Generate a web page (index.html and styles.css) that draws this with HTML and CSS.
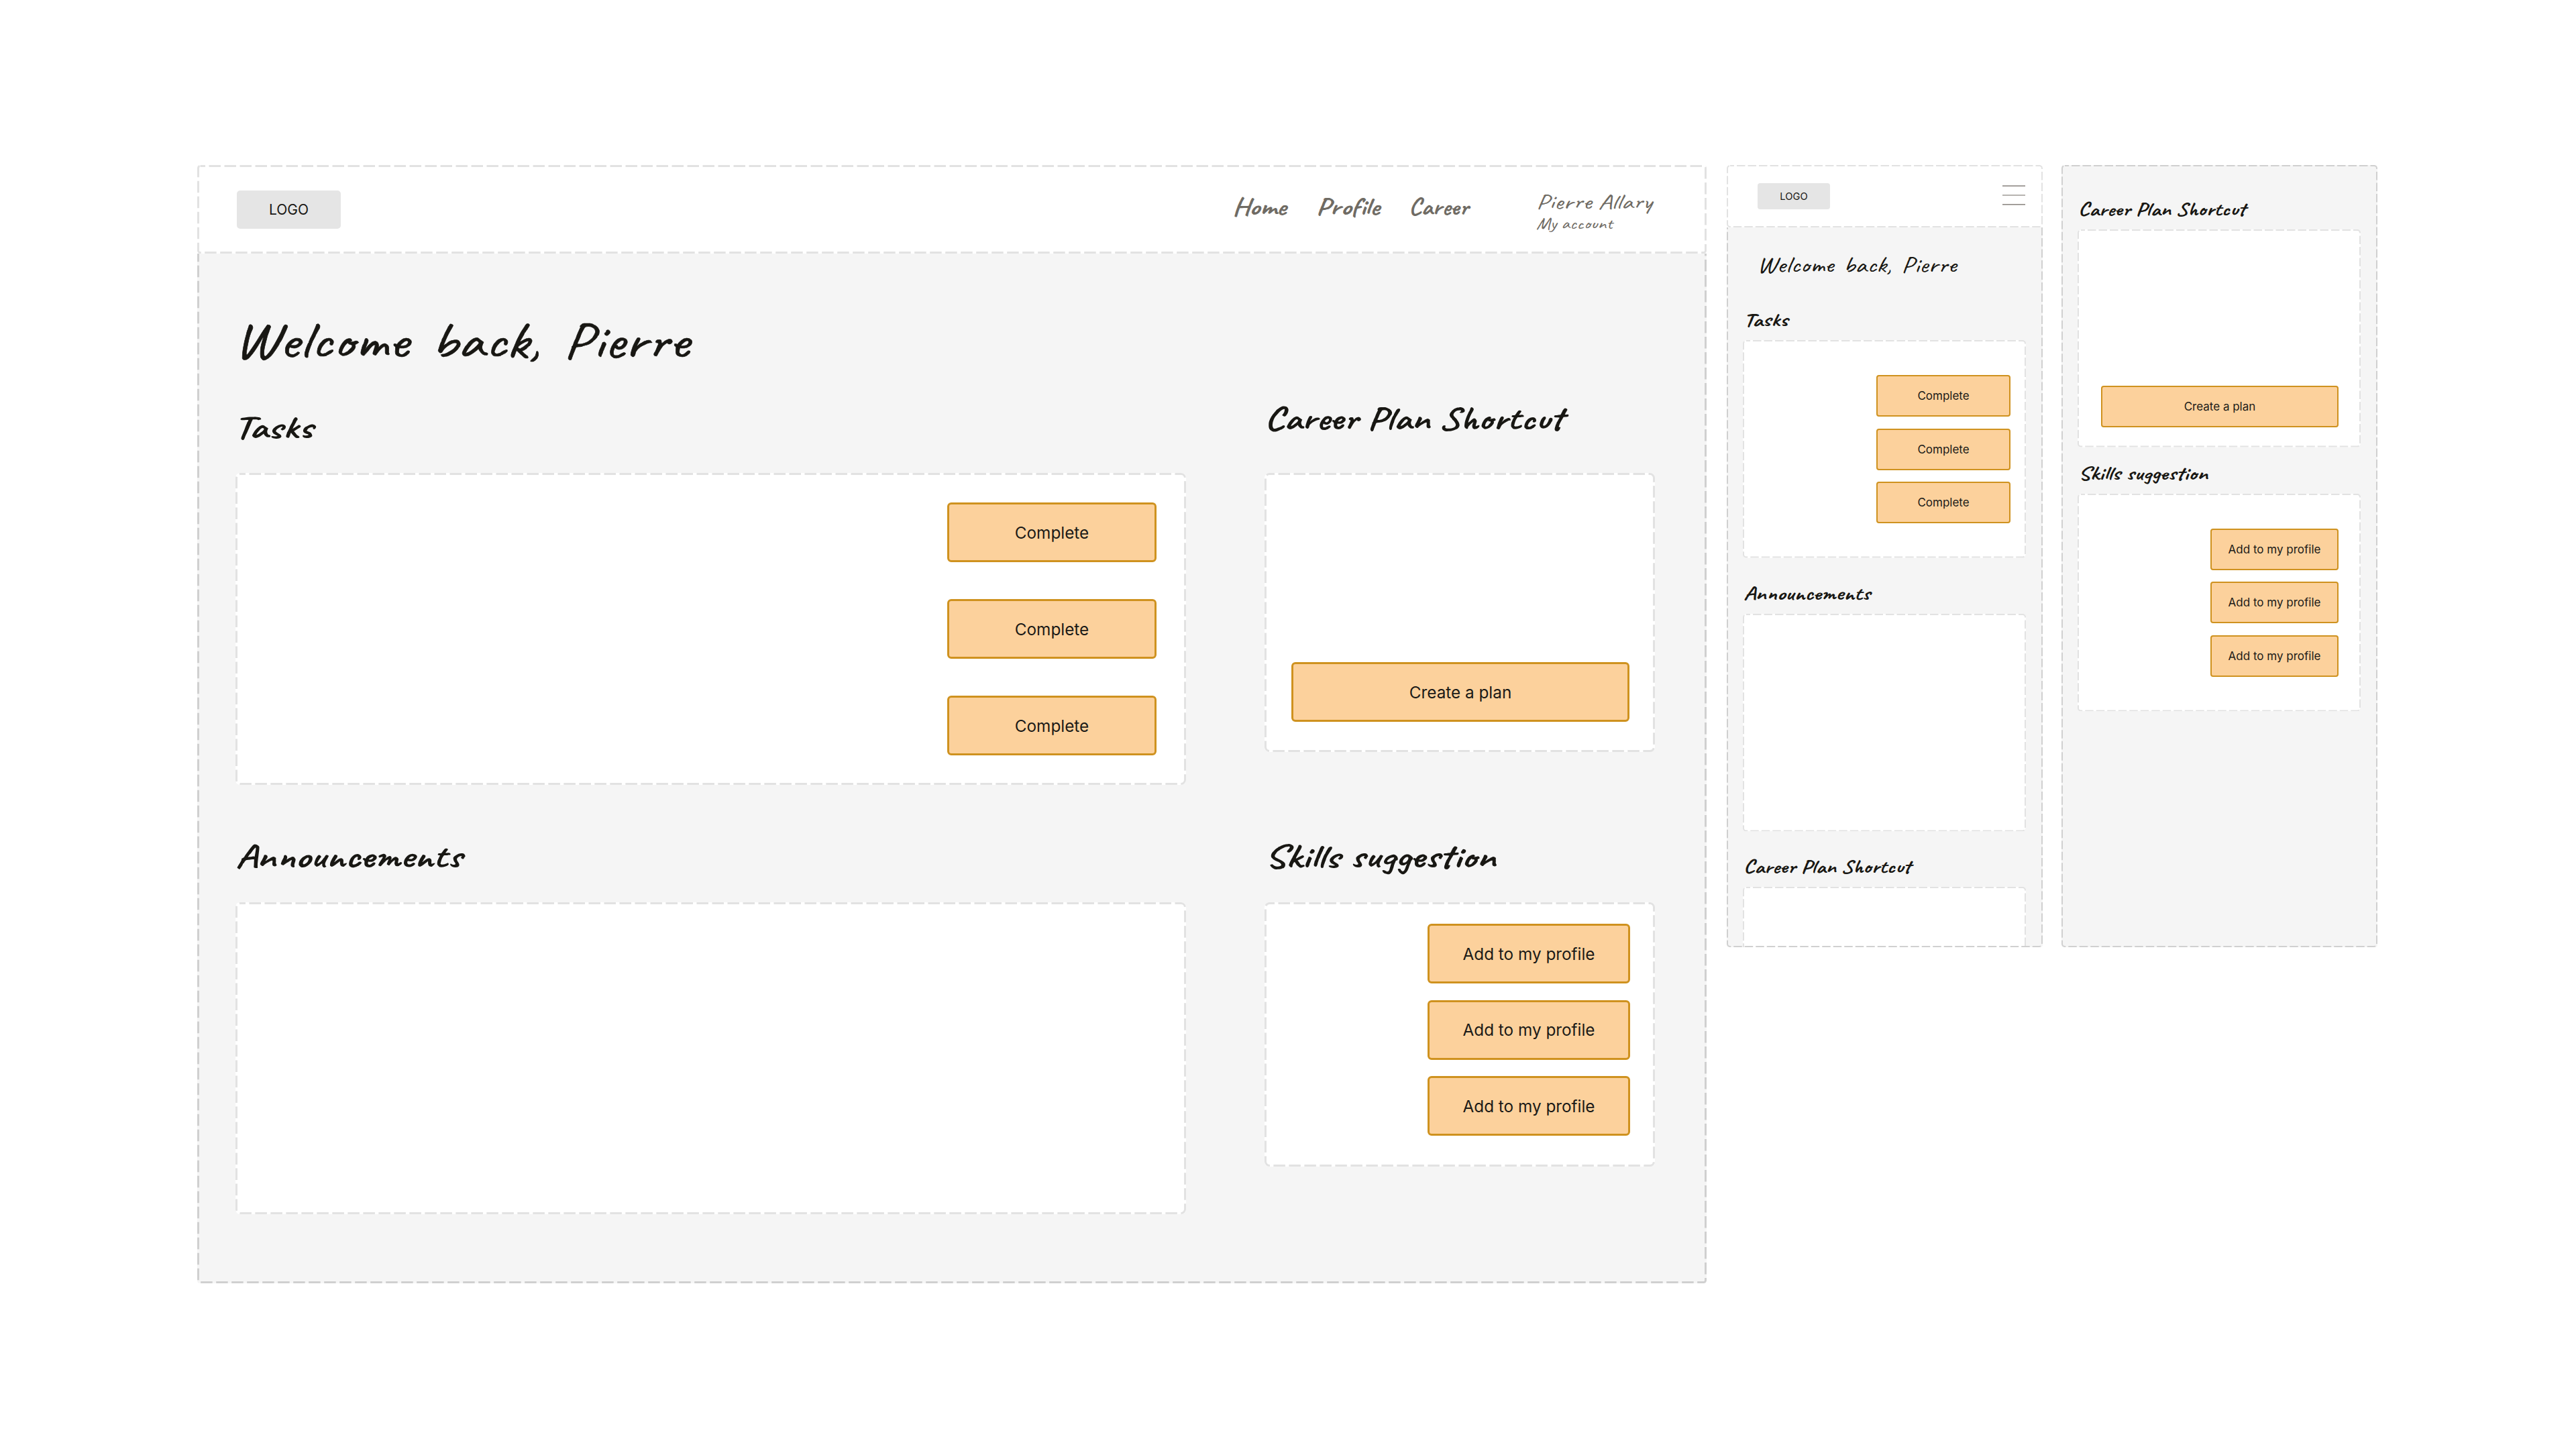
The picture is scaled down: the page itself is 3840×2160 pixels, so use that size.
FILE: index.html
```html
<!DOCTYPE html>
<html lang="en">
<head>
  <meta charset="UTF-8" />
  <meta name="viewport" content="width=device-width, initial-scale=1.0" />
  <title>Dashboard wireframes</title>
  <link rel="stylesheet" href="styles.css">
</head>
<body>
  <!-- Desktop -->
  <div class="frame desktop">
    <svg class="outline"><rect /></svg>
    <header class="header">
      <svg class="outline"><rect /></svg>
      <div class="logo">LOGO</div>
      <nav class="nav">
        <a class="nav-home">Home</a>
        <a class="nav-profile">Profile</a>
        <a class="nav-career">Career</a>
      </nav>
      <div class="account">
        <div class="account-name">Pierre Allary</div>
        <div class="account-link">My account</div>
      </div>
    </header>
    <h1>Welcome back, Pierre</h1>
    <div class="columns">
      <div class="main-col">
        <h2 class="tasks-title">Tasks</h2>
        <div class="panel tasks">
          <svg class="outline"><rect /></svg>
          <button>Complete</button>
          <button>Complete</button>
          <button>Complete</button>
        </div>
        <h2>Announcements</h2>
        <div class="panel">
          <svg class="outline"><rect /></svg>
        </div>
      </div>
      <div class="side-col">
        <h2 class="career-title">Career Plan Shortcut</h2>
        <div class="panel career">
          <svg class="outline"><rect /></svg>
          <button>Create a plan</button>
        </div>
        <h2>Skills suggestion</h2>
        <div class="panel skills">
          <svg class="outline"><rect /></svg>
          <button>Add to my profile</button>
          <button>Add to my profile</button>
          <button>Add to my profile</button>
        </div>
      </div>
    </div>
  </div>

  <!-- Mobile, first screen -->
  <div class="frame mobile">
    <svg class="outline"><rect /></svg>
    <header class="header">
      <svg class="outline"><rect /></svg>
      <div class="logo">LOGO</div>
      <svg class="burger" viewBox="0 0 34 30">
        <path d="M0 1.2h34M0 15h34M0 28.8h34" />
      </svg>
    </header>
    <h1>Welcome back, Pierre</h1>
    <div class="sections">
      <section>
        <h2>Tasks</h2>
        <div class="panel tasks">
          <svg class="outline"><rect /></svg>
          <button>Complete</button>
          <button>Complete</button>
          <button>Complete</button>
        </div>
      </section>
      <section>
        <h2>Announcements</h2>
        <div class="panel">
          <svg class="outline"><rect /></svg>
        </div>
      </section>
      <section>
        <h2 class="career-title">Career Plan Shortcut</h2>
        <div class="panel">
          <svg class="outline"><rect /></svg>
        </div>
      </section>
    </div>
  </div>

  <!-- Mobile, scrolled -->
  <div class="frame mobile scrolled">
    <svg class="outline"><rect /></svg>
    <div class="sections">
      <section>
        <h2 class="career-title">Career Plan Shortcut</h2>
        <div class="panel career">
          <svg class="outline"><rect /></svg>
          <button>Create a plan</button>
        </div>
      </section>
      <section>
        <h2>Skills suggestion</h2>
        <div class="panel skills">
          <svg class="outline"><rect /></svg>
          <button>Add to my profile</button>
          <button>Add to my profile</button>
          <button>Add to my profile</button>
        </div>
      </section>
    </div>
  </div>
</body>
</html>
```

FILE: styles.css
```css
* {
  box-sizing: border-box;
}

body {
  margin: 0;
  padding: 246px 294px 0;
  height: 2160px;
  display: flex;
  align-items: flex-start;
  background: #fff;
  color: #181713;
  font-family: Inter, sans-serif;
}

h1,
h2,
.nav,
.account {
  font-family: Caveat, Lato, cursive;
}

/* stretch the handwriting a bit, it runs too narrow otherwise */
h1,
h2,
.nav a,
.account {
  transform: scaleX(1.25);
  transform-origin: left;
}

h1,
h2 {
  width: max-content;
  margin: 0;
  white-space: nowrap;
}

h1 {
  font-weight: 400;
  word-spacing: 0.12em;
  transform: scaleX(1.215);
}

.frame {
  position: relative;
  flex: none;
  overflow: hidden;
  border-radius: 4px;
  background: #f5f5f5;
}

/* dashed outlines */
.outline {
  position: absolute;
  inset: 0;
  width: 100%;
  height: 100%;
  pointer-events: none;
}

.frame > .outline {
  z-index: 1;
}

.outline rect {
  x: 1.5px;
  y: 1.5px;
  width: calc(100% - 3px);
  height: calc(100% - 3px);
  rx: 6px;
  fill: none;
  stroke: #e2e2e2;
  stroke-width: 3px;
  stroke-dasharray: 17.5 5.5;
  stroke-dashoffset: -13px;
}

.frame > .outline rect {
  stroke: #d0d0d0;
  rx: 3px;
}

.header {
  position: relative;
  z-index: 2;
  display: flex;
  align-items: center;
  background: #fff;
}

.header .outline rect {
  rx: 3px;
}

.logo {
  display: flex;
  align-items: center;
  justify-content: center;
  border-radius: 5px;
  background: #e5e5e5;
}

.panel {
  position: relative;
  display: flex;
  flex-direction: column;
  align-items: flex-end;
  border-radius: 7px;
  background: #fff;
}

button {
  flex: none;
  padding: 0;
  border: 3px solid #cf921f;
  border-radius: 6px;
  background: #fcd19c;
  color: #1b1a17;
  font-family: inherit;
}

/* desktop */
.desktop {
  width: 2250px;
  height: 1667px;
  margin-right: 30px;
}

.desktop .header {
  height: 132px;
  padding-left: 59px;
}

.desktop .logo {
  width: 155px;
  height: 57px;
  font-size: 21px;
}

.nav {
  display: grid;
  grid-template-columns: 125px 138px 190px;
  margin-left: auto;
  padding-bottom: 6px;
  color: #6f6b64;
  font-size: 35px;
  font-weight: 700;
  line-height: 40px;
}

.nav .nav-career {
  transform: scaleX(1.1);
}

.account {
  width: 254px;
  padding-top: 5px;
  color: #6f6b64;
}

.account-name {
  font-size: 32.5px;
  line-height: 38px;
}

.account-link {
  font-size: 23px;
  line-height: 28px;
}

.desktop h1 {
  margin: 80px 0 -4px 54px;
  font-size: 76px;
  line-height: 100px;
  -webkit-text-stroke: 0.6px #181713;
}

.desktop h2 {
  padding-top: 6px;
  font-size: 50px;
  line-height: 54px;
}

.desktop .tasks-title {
  margin-left: -3px;
}

.columns {
  display: grid;
  grid-template-columns: 1417px 582px;
  column-gap: 117px;
  padding-left: 57px;
}

.main-col {
  padding-top: 50px;
}

.main-col .panel {
  height: 465px;
  margin: 41px 0 74px;
}

.side-col {
  padding-top: 37px;
}

.side-col .career {
  height: 416px;
  margin: 54px 0 123px;
}

.side-col .skills {
  height: 394px;
  margin-top: 41px;
}

h2.career-title {
  transform: scaleX(1.2);
}

.desktop button {
  height: 89px;
  font-size: 24.3px;
}

.desktop .tasks {
  gap: 55px;
  padding: 44px 44px 0;
}

.desktop .tasks button {
  width: 312px;
}

.desktop .career {
  justify-content: flex-end;
  padding: 0 38px 45px 40px;
}

.career button {
  width: 100%;
}

.desktop .skills {
  gap: 24.5px;
  padding: 32px 37px 0;
}

.desktop .skills button {
  width: 302px;
}

/* mobile */
.mobile {
  width: 471px;
  height: 1166px;
  margin-right: 28px;
}

.mobile .outline rect {
  x: 1px;
  y: 1px;
  width: calc(100% - 2px);
  height: calc(100% - 2px);
  stroke-width: 2px;
  stroke-dasharray: 12.5 4;
  stroke-dashoffset: -10px;
  rx: 4px;
}

.mobile .frame > .outline rect {
  stroke: #c8c8c8;
}

.mobile.scrolled {
  margin-right: 0;
}

.mobile .header {
  height: 93px;
  padding: 0 26px 0 46px;
}

.mobile .logo {
  width: 108px;
  height: 39px;
  border-radius: 4px;
  font-size: 14.7px;
}

.burger {
  width: 34px;
  height: 30px;
  margin: 0 0 4px auto;
  fill: none;
  stroke: #6f6862;
  stroke-width: 1.2px;
}

.mobile h1 {
  margin: 32px 0 43px 45px;
  padding-top: 4px;
  font-size: 33.3px;
  line-height: 40px;
}

.mobile h2 {
  margin: 0 0 15px 1px;
  padding-top: 4px;
  font-size: 28px;
  line-height: 30px;
}

.sections {
  display: flex;
  flex-direction: column;
  gap: 34px;
  padding: 0 25px 0 24px;
}

.scrolled .sections {
  gap: 20px;
  padding-top: 47px;
}

.mobile .panel {
  height: 324.5px;
}

.mobile button {
  height: 62px;
  border-width: 2.5px;
  border-radius: 4px;
  font-size: 17px;
}

.mobile .tasks,
.mobile .skills {
  gap: 17.5px;
  padding: 52px 23px 0;
}

.mobile .tasks button {
  width: 200px;
}

.mobile .career {
  justify-content: flex-end;
  padding: 0 33px 30px 35px;
}

.mobile .skills {
  padding-right: 33px;
}

.mobile .skills button {
  width: 191px;
}
```
